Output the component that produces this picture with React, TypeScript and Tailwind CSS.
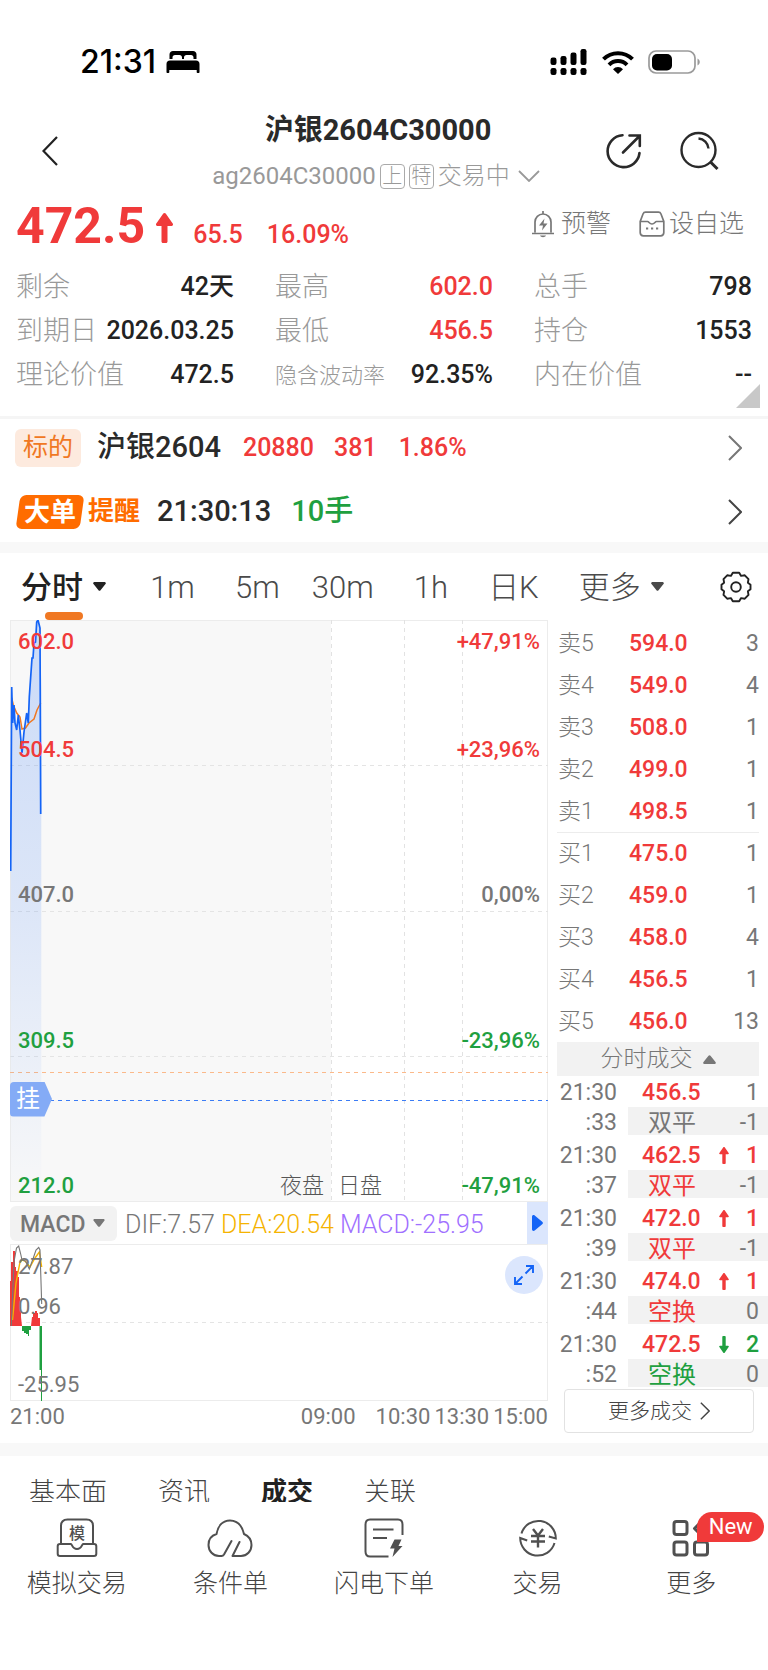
import type { ReactNode } from "react";
import clsx from "clsx";
import { twMerge } from "tailwind-merge";

const stats = [
  { label: "剩余", value: "42天" },
  { label: "最高", value: "602.0", up: true },
  { label: "总手", value: "798" },
  { label: "到期日", value: "2026.03.25" },
  { label: "最低", value: "456.5", up: true },
  { label: "持仓", value: "1553" },
  { label: "理论价值", value: "472.5" },
  { label: "隐含波动率", value: "92.35%", small: true },
  { label: "内在价值", value: "--" },
];

const orders = [
  ["卖5", "594.0", "3"],
  ["卖4", "549.0", "4"],
  ["卖3", "508.0", "1"],
  ["卖2", "499.0", "1"],
  ["卖1", "498.5", "1"],
  ["买1", "475.0", "1"],
  ["买2", "459.0", "1"],
  ["买3", "458.0", "4"],
  ["买4", "456.5", "1"],
  ["买5", "456.0", "13"],
];

const trades = [
  { sec: ":33", price: "456.5", dir: "", qty: "1", kind: "双平", delta: "-1" },
  { sec: ":37", price: "462.5", dir: "up", qty: "1", kind: "双平", delta: "-1" },
  { sec: ":39", price: "472.0", dir: "up", qty: "1", kind: "双平", delta: "-1" },
  { sec: ":44", price: "474.0", dir: "up", qty: "1", kind: "空换", delta: "0" },
  { sec: ":52", price: "472.5", dir: "down", qty: "2", kind: "空换", delta: "0" },
];

const dirColor: Record<string, string> = {
  "": "text-[#777]",
  up: "text-[#f03a3a]",
  down: "text-[#1fa040]",
};

function Caret({ className }: { className?: string }) {
  return (
    <svg viewBox="0 0 13 9" className={twMerge("h-[9px] w-[13px] fill-current", className)}>
      <path d="M1.6 0h9.8c1.2 0 1.9 1.2 1.1 2.1L7.5 8.3c-.5.7-1.5.7-2 0L.5 2.1C-.3 1.2.4 0 1.6 0Z" />
    </svg>
  );
}

function Arrow({ className }: { className?: string }) {
  return (
    <svg viewBox="0 0 17 30" className={clsx("fill-current", className)}>
      <path d="M7.3.6c.6-.8 1.8-.8 2.4 0l7 9.8c.8 1.1.1 2.6-1.2 2.6h-4v15.5c0 .8-.6 1.5-1.5 1.5H7c-.8 0-1.5-.7-1.5-1.5V13h-4C.2 13-.5 11.5.3 10.4Z" />
    </svg>
  );
}

function Chevron({ className }: { className?: string }) {
  return (
    <svg viewBox="0 0 14 26" fill="none" stroke="currentColor" strokeWidth="2" className={twMerge("h-[26px] w-[14px]", className)}>
      <path d="M1 1l12 12L1 25" />
    </svg>
  );
}

function StatusBar() {
  return (
    <div className="flex items-center justify-between pt-[46px] pr-[67px] pl-20 text-black">
      <div className="flex items-center gap-[10px]">
        <span className="font-[Inter,sans-serif] text-[32px] leading-8 font-medium">21:31</span>
        <svg viewBox="0 0 34 22" className="h-[22px] w-[34px] fill-current">
          <path d="M3.5 8V3.5C3.5 1.5 5 0 7 0h20c2 0 3.5 1.5 3.5 3.5V8h-3V6.5C27.5 5 26.5 4 25 4h-4.5C19 4 18 5 18 6.5V8h-2V6.5C16 5 15 4 13.5 4H9C7.5 4 6.5 5 6.5 6.5V8Z" />
          <path d="M4 9.5h26c2.2 0 3.5 1.5 3.5 3.5v8.2c0 .5-.3.8-.8.8h-1.2c-.5 0-.8-.3-.8-.8V19H3.3v2.2c0 .5-.3.8-.8.8H1.3c-.5 0-.8-.3-.8-.8V13C.5 11 1.8 9.5 4 9.5Z" />
        </svg>
      </div>
      <div className="flex items-center gap-[14px]">
        <svg viewBox="0 0 38 27" className="h-[27px] w-[38px] fill-current">
          <rect x="0.5" y="8.5" width="6" height="7.5" rx="2.2" />
          <rect x="10.5" y="7" width="6" height="9" rx="2.2" />
          <rect x="20.5" y="3.5" width="6" height="12.5" rx="2.2" />
          <rect x="30.5" y="0" width="6" height="16" rx="2.2" />
          <rect x="0.5" y="19" width="6" height="7" rx="2.2" />
          <rect x="10.5" y="19" width="6" height="7" rx="2.2" />
          <rect x="20.5" y="19" width="6" height="7" rx="2.2" />
          <rect x="30.5" y="19" width="6" height="7" rx="2.2" />
        </svg>
        <svg viewBox="0 0 32 24" fill="none" stroke="currentColor" strokeWidth="4" className="h-6 w-8">
          <path d="M1.5 9.2a20.5 20.5 0 0 1 29 0" />
          <path d="M7 14.8a12.7 12.7 0 0 1 18 0" />
          <path d="M16 24l-5-4.8a7 7 0 0 1 10 0Z" className="fill-current" stroke="none" />
        </svg>
        <svg viewBox="0 0 53 24" className="h-6 w-[53px]">
          <rect x="1" y="1" width="46" height="22" rx="7" fill="none" stroke="#9a9a9a" strokeWidth="1.7" />
          <rect x="4" y="4" width="20" height="16.5" rx="5" fill="#000" />
          <path d="M49.5 8.5c3 1.5 3 5.5 0 7Z" fill="#9a9a9a" />
        </svg>
      </div>
    </div>
  );
}

function Header() {
  return (
    <header className="mt-8 flex items-center">
      <div className="w-[150px] pl-[42px]">
        <button aria-label="返回" className="block">
          <svg viewBox="0 0 16 30" fill="none" stroke="#222" strokeWidth="2.2" className="h-[30px] w-4">
            <path d="M15 1L1.5 15 15 29" />
          </svg>
        </button>
      </div>
      <div className="flex min-w-0 flex-1 flex-col items-center">
        <h1 className="text-[29px] leading-10 font-bold whitespace-nowrap text-[#2a2a2a]">沪银2604C30000</h1>
        <button className="mt-2.5 flex items-center gap-1 pr-1 text-2xl leading-8 whitespace-nowrap text-[#999]">
          <span>ag2604C30000</span>
          <span className="flex h-[25px] w-[25px] items-center justify-center rounded border border-[#aaa] text-xl leading-5 font-light">上</span>
          <span className="flex h-[25px] w-[25px] items-center justify-center rounded border border-[#aaa] text-xl leading-5 font-light">特</span>
          <span className="font-light">交易中</span>
          <svg viewBox="0 0 22 12" fill="none" stroke="currentColor" strokeWidth="1.8" className="ml-1 h-3 w-[22px]">
            <path d="M1 1l10 10L21 1" />
          </svg>
        </button>
      </div>
      <div className="flex w-[162px] items-center gap-9 text-[#2a2a2a]">
        <button aria-label="分享">
          <svg viewBox="0 0 38 38" fill="none" stroke="currentColor" strokeWidth="2.6" strokeLinecap="round" className="h-[38px] w-[38px]">
            <path d="M16.5 3.2A16 16 0 1 0 33.5 21" />
            <path d="M17 20.5L33.5 4M23.5 3.5h10.3v10.5" strokeLinejoin="miter" />
          </svg>
        </button>
        <button aria-label="搜索">
          <svg viewBox="0 0 40 40" fill="none" stroke="currentColor" strokeWidth="2.4" className="h-10 w-10">
            <circle cx="18.5" cy="19" r="17" />
            <path d="M18.500 7.500a11 11 0 0 1 10 10" />
            <path d="M30.500 31l7 7" strokeWidth="3" />
          </svg>
        </button>
      </div>
    </header>
  );
}

function Quote() {
  return (
    <section>
      <div className="mt-[9px] flex items-start justify-between pr-6 pl-4">
        <div className="flex items-baseline text-[25px] leading-none font-medium text-[#f03a3a]">
          <strong className="text-[50px] leading-[50px] font-bold">472.5</strong>
          <Arrow className="ml-[11px] h-[30px] w-[17px]" />
          <span className="ml-5">65.5</span>
          <span className="ml-6">16.09%</span>
        </div>
        <div className="flex gap-7 pt-[7px] text-[25px] leading-8 font-light text-[#777]">
          <button className="flex items-center gap-1.5">
            <svg viewBox="0 0 24 28" fill="none" stroke="currentColor" strokeWidth="1.7" className="h-7 w-6">
              <path d="M4 22.5V12a8 8 0 0 1 16 0v10.5M1 23.5h22M12 1v3" />
              <path d="M9 25.5h6c-.8 2.2-5.2 2.2-6 0ZM13.5 8.5l-5.5 7h4l-1 5 5.5-7h-4Z" className="fill-current" stroke="none" />
            </svg>
            预警
          </button>
          <button className="flex items-center gap-1">
            <svg viewBox="0 0 26 26" fill="none" stroke="currentColor" strokeWidth="1.7" className="h-[26px] w-[26px]">
              <path d="M1.2 10.5h7.3c1.5 0 1.8 2.5 4.5 2.5s3-2.5 4.5-2.5h7.3M1.2 10.5v11c0 2 1.2 3.3 3.2 3.3h17.2c2 0 3.2-1.3 3.2-3.3v-11L22 3c-.5-1.2-1.2-1.8-2.5-1.8h-13C5.2 1.2 4.5 1.8 4 3Z" />
              <path d="M7 17.5h2.2M12 17.5h2.2M17 17.5h2.2" strokeWidth="2.2" />
            </svg>
            设自选
          </button>
        </div>
      </div>
      <dl className="mt-[14px] grid grid-cols-3 gap-x-[41px] px-4">
        {stats.map((s) => (
          <div key={s.label} className="flex h-11 items-center justify-between whitespace-nowrap">
            <dt className={clsx("font-light text-[#999]", s.small ? "text-[22px]" : "text-[27px]")}>{s.label}</dt>
            <dd className={clsx("text-[25px] font-medium", s.up ? "text-[#f03a3a]" : "text-[#222]")}>{s.value}</dd>
          </div>
        ))}
      </dl>
      <div className="-mt-[13px] flex justify-end pr-2">
        <svg viewBox="0 0 24 24" className="h-6 w-6 fill-[#c8c8c8]">
          <path d="M24 0v24H0Z" />
        </svg>
      </div>
      <div className="mt-2 h-[3px] bg-[#f5f5f5]" />
    </section>
  );
}

function Linked() {
  return (
    <section className="flex flex-col text-[25px] whitespace-nowrap">
      <a href="#underlying" className="flex h-[58px] items-center pr-[26px] pl-[15px]">
        <span className="rounded-md bg-[#fdeade] px-2 leading-[38px] text-[#f07823]">标的</span>
        <span className="ml-4 text-[29px] font-medium text-[#2a2a2a]">沪银2604</span>
        <span className="ml-[22px] font-medium text-[#f03a3a]">20880</span>
        <span className="ml-5 font-medium text-[#f03a3a]">381</span>
        <span className="ml-[22px] font-medium text-[#f03a3a]">1.86%</span>
        <Chevron className="ml-auto text-[#777]" />
      </a>
      <a href="#alerts" className="flex h-[65px] items-center pt-1 pr-[26px] pl-[18px]">
        <span className="-skew-x-8 rounded-md bg-[#ff6c00] px-1.5 leading-[34px] font-bold text-white">
          <span className="block skew-x-8 text-[26px]">大单</span>
        </span>
        <span className="ml-1.5 text-[26px] font-bold text-[#ff6c00]">提醒</span>
        <span className="ml-[17px] text-[29px] font-medium text-[#2a2a2a]">21:30:13</span>
        <span className="ml-5 text-[29px] font-medium text-[#1fa040]">10手</span>
        <Chevron className="ml-auto text-[#444]" />
      </a>
      <div className="h-[11px] bg-[#f8f8f8]" />
    </section>
  );
}

function Periods() {
  return (
    <nav className="flex h-[67px] items-center justify-between pr-4 pl-[21px] text-[31px] font-light whitespace-nowrap text-[#4a4a4a]">
      <button className="relative flex h-full items-center gap-2.5 pt-1 font-medium text-[#222]">
        分时
        <Caret className="-mt-1" />
        <span className="absolute bottom-0 left-6 h-2 w-[38px] rounded bg-[#f07823]" />
      </button>
      <button className="ml-1 pt-1">1m</button>
      <button className="pt-1">5m</button>
      <button className="-ml-2 pt-1">30m</button>
      <button className="pt-1">1h</button>
      <button className="pt-1">日K</button>
      <button className="flex items-center gap-2.5 pt-1">
        更多
        <Caret className="-mt-1" />
      </button>
      <button aria-label="设置" className="ml-4">
        <svg viewBox="0 0 32 32" fill="none" stroke="#222" strokeWidth="1.9" strokeLinejoin="round" className="h-8 w-8">
          <path d="M12.8 1.8h6.4l1.9 3.1 3.7-.6 3.7 3.9-.6 3.5 2.6 2v4.6l-2.6 2 .6 3.5-3.7 3.9-3.7-.6-1.9 3.1h-6.4l-1.9-3.1-3.7.6-3.7-3.9.6-3.5-2.6-2v-4.6l2.6-2-.6-3.5 3.7-3.9 3.7.6Z" />
          <circle cx="16" cy="16" r="4.8" />
        </svg>
      </button>
    </nav>
  );
}

function Level({ left, right, className }: { left: string; right: string; className?: string }) {
  return (
    <div className={clsx("flex justify-between", className)}>
      <span>{left}</span>
      <span>{right}</span>
    </div>
  );
}

function PriceChart() {
  return (
    <div className="grid h-[582px] text-[22px] leading-8 font-medium">
      <svg viewBox="0 0 538 582" preserveAspectRatio="none" fill="none" className="h-full w-full [grid-area:1/1]">
        <defs>
          <linearGradient id="area" x1="0" y1="0" x2="0" y2="1">
            <stop offset="0" stopColor="#1464f6" stopOpacity="0.2" />
            <stop offset="0.5" stopColor="#1464f6" stopOpacity="0.12" />
            <stop offset="1" stopColor="#1464f6" stopOpacity="0" />
          </linearGradient>
        </defs>
        <rect width="321" height="582" fill="#f8f8f8" />
        <rect x="0.5" y="0.5" width="537" height="581" stroke="#ececec" />
        <path d="M0 145.5h538M0 291.5h538M0 436.5h538" stroke="#e4e4e4" strokeDasharray="4 4" />
        <path d="M321.5 0v582M394.5 0v582M452.5 0v582" stroke="#e2e2e2" strokeDasharray="4 4" />
        <path d="M0 452.5h538" stroke="#fbb98a" strokeDasharray="4 4" />
        <path
          d="M.7 251L1.7 67l1 36L4 85l1 18 1.7 7L8.3 95 10 110l2 23 2-21 2.7-19 1.6 10 1-26L22 38h1l1-15 1.5-1L26.7 2 28 0l2 8 1.3 60V582H.7Z"
          fill="url(#area)"
        />
        <path d="M1.7 78l1.6 7 3.4 8 3.3 4 2 12 3.5-1 3.5-5 5-4 3-9 3.7-7" stroke="#f07823" strokeWidth="1.5" />
        <path
          d="M.7 251L1.7 67l1 36L4 85l1 18 1.7 7L8.3 95 10 110l2 23 2-21 2.7-19 1.6 10 1-26L22 38h1l1-15 1.5-1L26.7 2 28 0l2 8 .7 186"
          stroke="#1464f6"
          strokeWidth="1.7"
        />
        <path d="M0 480.5h538" stroke="#3b7cf5" strokeDasharray="4 4" />
      </svg>
      <div className="grid grid-rows-4 px-2 [grid-area:1/1]">
        <div className="flex flex-col justify-between pt-1.5 text-[#f03a3a]">
          <Level left="602.0" right="+47,91%" />
          <Level left="504.5" right="+23,96%" />
        </div>
        <Level left="407.0" right="0,00%" className="items-end text-[#777]" />
        <Level left="309.5" right="-23,96%" className="items-end text-[#1fa040]" />
        <div className="flex flex-col justify-between pt-[25px] text-[#1fa040]">
          <span className="-ml-2 flex h-[35px] w-[42px] items-center rounded-l bg-[#84abf6] pl-1.5 text-2xl font-normal text-white [clip-path:polygon(0_0,82%_0,100%_50%,82%_100%,0_100%)]">
            挂
          </span>
          <div className="flex items-end">
            <span>212.0</span>
            <span className="ml-auto font-light text-[#555]">夜盘</span>
            <span className="ml-3.5 flex w-[202px] justify-between">
              <span className="font-light text-[#555]">日盘</span>
              <span>-47,91%</span>
            </span>
          </div>
        </div>
      </div>
    </div>
  );
}

function MacdChart() {
  return (
    <>
      <div className="flex h-[42px] items-center text-[25px] font-light whitespace-nowrap text-[#777]">
        <button className="flex h-[35px] w-[107px] items-center gap-2 rounded-md bg-[#f2f2f2] pt-1 pl-2.5 text-[23px] font-medium">
          MACD
          <Caret className="-mt-1 h-2 w-3" />
        </button>
        <span className="ml-2 pt-1">DIF:7.57</span>
        <span className="ml-1.5 pt-1 text-[#f5b301]">DEA:20.54</span>
        <span className="ml-1.5 pt-1 text-[#a070ff]">MACD:-25.95</span>
        <button aria-label="下一个指标" className="ml-auto flex h-full w-[21px] items-center justify-center bg-[#dbe6fd] text-[#1464f6]">
          <svg viewBox="0 0 11 16" className="h-4 w-[11px] fill-current">
            <path d="M0 1.8C0 .3 1.5-.4 2.7.5l7.5 6.2c.9.7.9 1.9 0 2.6l-7.5 6.2C1.5 16.4 0 15.7 0 14.2Z" />
          </svg>
        </button>
      </div>
      <div className="grid h-[157px] text-[22px] leading-8 text-[#777]">
        <svg viewBox="0 0 538 157" preserveAspectRatio="none" fill="none" className="h-full w-full [grid-area:1/1]">
          <rect x="0.5" y="0.5" width="537" height="156" stroke="#ececec" />
          <path d="M0 78.5h538" stroke="#e4e4e4" strokeDasharray="4 4" />
          <path d="M0 82V37h1V18h2V7h2v16h1v4h2v6h1v20h1v10h1v10l1 9ZM21 82l1-9h1v-4h2v-2h2v2h1v5h2v8Z" fill="#f03a3a" />
          <path d="M12 82v5h2v2h2v1h2v2h1v-6h2v-4ZM29.5 82h2.5v75h-1v-31h-1.5Z" fill="#1fa040" />
          <path d="M2.5 76L6 39l4-21 2.5-2 2.5 1 5 6 5-9 4.3-6 2.4 15" stroke="#f5b301" strokeWidth="1.4" />
          <path d="M1.3 82L4 18 6.5 4l2.2-2 2 8L12 16l3.5 1 3.8 8 4-11L26 6l2.7-2.5L30 6l1.7 54" stroke="#777" strokeWidth="1.1" />
        </svg>
        <div className="flex justify-between pr-[5px] pl-2 [grid-area:1/1]">
          <div className="flex flex-col justify-between pt-[7px]">
            <div>
              <div>27.87</div>
              <div className="mt-2">0.96</div>
            </div>
            <div>-25.95</div>
          </div>
          <button aria-label="放大" className="mt-3 flex h-[38px] w-[38px] items-center justify-center rounded-full bg-[#dbe6fd]">
            <svg viewBox="0 0 20 20" fill="none" stroke="#1464f6" strokeWidth="1.9" className="h-5 w-5">
              <path d="M11.5 8.5L19 1M12 1h7v7M8.5 11.5L1 19M1 12v7h7" />
            </svg>
          </button>
        </div>
      </div>
      <div className="flex justify-between text-[22px] leading-8 whitespace-nowrap text-[#777]">
        <span>21:00</span>
        <span className="flex gap-1">
          <span className="mr-4">09:00</span>
          <span>10:30</span>
          <span>13:30</span>
          <span>15:00</span>
        </span>
      </div>
    </>
  );
}

function OrderBook() {
  return (
    <aside className="w-[220px] shrink-0 pt-0.5 pl-[9px] text-[23px] leading-7 whitespace-nowrap text-[#777]">
      <div className="pr-[9px]">
        <table className="w-full table-fixed border-collapse">
          <tbody>
            {orders.map(([name, price, qty]) => (
              <tr key={name} className={clsx("h-[42px] *:pt-0.5", name === "买1" && "border-t border-[#ececec]")}>
                <th scope="row" className="w-[72px] pl-px text-left font-light">{name}</th>
                <td className="font-medium text-[#f03a3a]">{price}</td>
                <td className="w-10 text-right">{qty}</td>
              </tr>
            ))}
          </tbody>
        </table>
        <button className="flex h-[34px] w-full items-center justify-center gap-2.5 bg-[#f2f2f2] font-light">
          分时成交
          <Caret className="rotate-180" />
        </button>
      </div>
      <table className="w-full table-fixed border-collapse">
        <colgroup>
          <col className="w-[71px]" />
          <col className="w-[91px]" />
          <col className="w-4" />
          <col />
        </colgroup>
        <tbody>
          {trades.map((t) => (
            <Trade key={t.sec} {...t} />
          ))}
        </tbody>
      </table>
      <button className="mt-[2px] ml-[7px] flex h-11 w-[190px] items-center justify-center gap-2 rounded border border-[#e2e2e2] text-[21px] font-light text-[#444]">
        更多成交
        <Chevron className="h-[18px] w-[10px]" />
      </button>
    </aside>
  );
}

function Trade({ sec, price, dir, qty, kind, delta }: (typeof trades)[number]) {
  return (
    <>
      <tr className="h-[31px] *:pt-0.5">
        <td className="pr-[11px] text-right">21:30</td>
        <td className="pl-[14px] font-medium text-[#f03a3a]">{price}</td>
        <td className={dirColor[dir]}>
          {dir && <Arrow className={clsx("h-[17px] w-[10px]", dir === "down" && "rotate-180")} />}
        </td>
        <td className={clsx("pr-[9px] text-right", dirColor[dir], dir && "font-medium")}>{qty}</td>
      </tr>
      <tr className="group leading-6">
        <td className="h-8 pt-1 pr-[11px] text-right align-top group-last:h-7">{sec}</td>
        <td colSpan={3} className="h-8 align-top group-last:h-7">
          <div className="flex justify-between bg-[#f2f2f2] pt-1 pr-[9px] pl-5">
            <span className={clsx("text-2xl leading-6", dirColor[dir])}>{kind}</span>
            <span>{delta}</span>
          </div>
        </td>
      </tr>
    </>
  );
}

function NavItem({ label, children }: { label: string; children: ReactNode }) {
  return (
    <button className="flex flex-col items-center text-[25px] leading-8 font-light whitespace-nowrap text-[#444]">
      <span className="relative">
        <svg viewBox="0 0 46 40" fill="none" stroke="#505050" strokeWidth="2" className="h-10 w-[46px]">
          {children}
        </svg>
        {label === "更多" && (
          <span className="absolute -top-1.5 left-[29px] flex h-[30px] w-[67px] items-center justify-center rounded-full rounded-bl-none bg-[#f03a3a] text-[22px] font-normal text-white">
            New
          </span>
        )}
      </span>
      <span className="mt-2.5">{label}</span>
    </button>
  );
}

function BottomNav() {
  return (
    <nav className="grid grid-cols-5 pt-4 pb-[70px]">
      <NavItem label="模拟交易">
        <path d="M7 25V8c0-4 2.5-6.5 6.5-6.5h19C36.5 1.5 39 4 39 8v17" />
        <path d="M6 26h11c1 0 1.2 5 6 5s5-5 6-5h11c1.5 0 2.3 1 2.3 2.3v7.4c0 1.3-.8 2.3-2.3 2.3H6c-1.5 0-2.3-1-2.3-2.3v-7.4C3.7 27 4.5 26 6 26Z" />
        <text x="23" y="21" textAnchor="middle" fontSize="16" fontWeight="500" fill="#505050" stroke="none">
          模
        </text>
      </NavItem>
      <NavItem label="条件单">
        <path d="M24.5 23L17 36.5c-.6 1-1.2 1.5-2.5 1.5h-2.5C6 38 1.5 33 1.5 27c0-5.5 3-9.5 8-11C11 7.5 16 2.5 23 2.5S35 7.5 37 16c4.5 2 7.5 6 7.5 11 0 6-4.5 11-10.5 11h-8.5L32.5 24" strokeLinecap="round" strokeLinejoin="round" />
      </NavItem>
      <NavItem label="闪电下单">
        <path d="M41.5 17V6.5c0-3-1.5-5-4.5-5H9c-3 0-4.5 2-4.5 5v27c0 3 1.5 5 4.5 5h18.5M12 11.5h20.5M12 20h14" />
        <path d="M33.5 21.5h7l-3 6.5h4L31.5 39l2-8.5H29Z" fill="#505050" stroke="none" />
      </NavItem>
      <NavItem label="交易">
        <path d="M6.5 15.5A17.5 17.5 0 0 1 40.8 20.5l-7-2M39.5 25A17.5 17.5 0 0 1 5.2 20l7 2.5" />
        <path d="M18 11l5 6.5 5-6.5M16 18h14M16 23.5h14M23 17.5V29.5" strokeWidth="2.4" />
      </NavItem>
      <NavItem label="更多">
        <g strokeWidth="3">
          <rect x="6" y="3.5" width="13" height="13" rx="2.5" />
          <rect x="6" y="24" width="13" height="13" rx="2.5" />
          <rect x="26.5" y="24" width="13" height="13" rx="2.5" />
          <path d="M33.500 3.500l7 7-7 7-7-7Z" strokeLinejoin="round" />
        </g>
      </NavItem>
    </nav>
  );
}

export default function App() {
  return (
    <main className="min-h-screen bg-white font-[Roboto,'Noto_Sans_CJK_SC',sans-serif] text-[#222]">
      <StatusBar />
      <Header />
      <Quote />
      <Linked />
      <Periods />
      <div className="flex">
        <div className="min-w-0 flex-1 pl-2.5">
          <PriceChart />
          <MacdChart />
        </div>
        <OrderBook />
      </div>
      <div className="mt-2.5 h-[13px] bg-[#f8f8f8]" />
      <div className="flex h-[46px] gap-[51px] overflow-hidden pt-4 pl-[29px] text-[26px] leading-10 font-light whitespace-nowrap text-[#444]">
        <button>基本面</button>
        <button>资讯</button>
        <button className="font-bold text-[#222]">成交</button>
        <button>关联</button>
      </div>
      <BottomNav />
    </main>
  );
}
